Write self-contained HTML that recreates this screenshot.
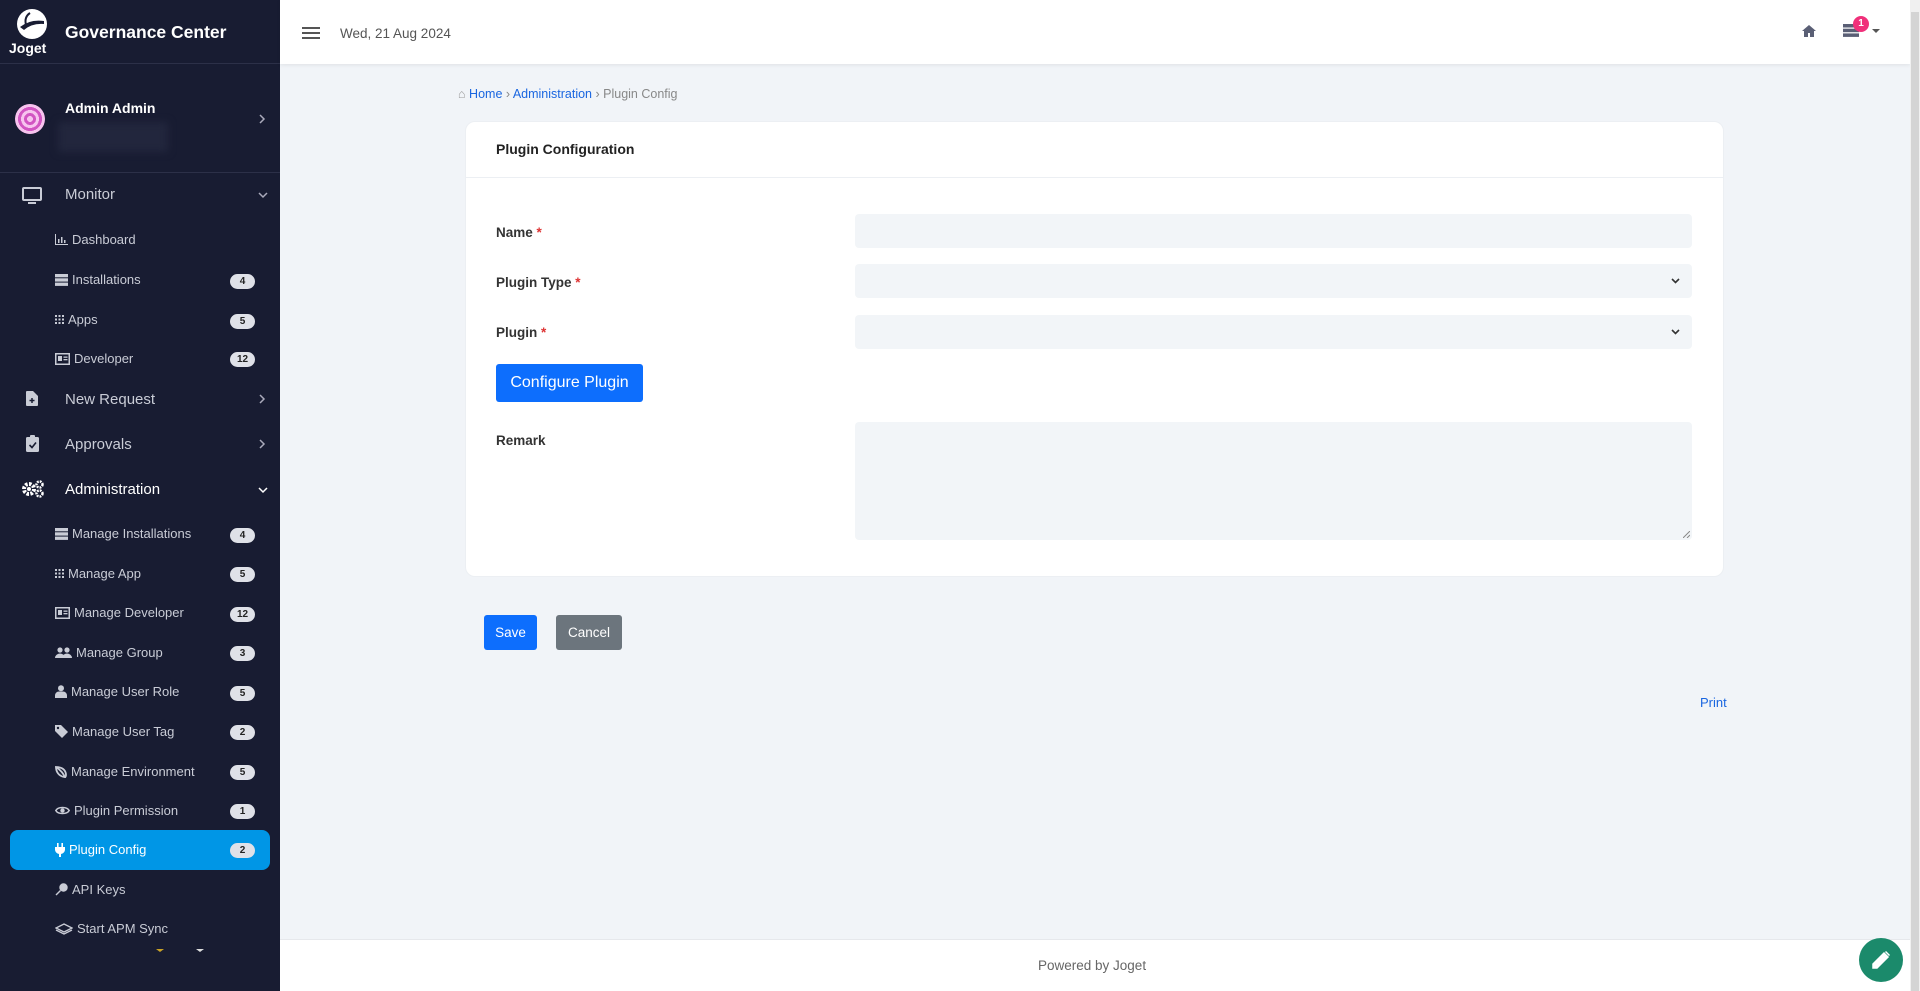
<!DOCTYPE html>
<html><head><meta charset="utf-8"><style>
*{box-sizing:border-box;margin:0;padding:0}
body{width:1920px;height:991px;overflow:hidden;background:#f1f4f8;font-family:"Liberation Sans",sans-serif;position:relative}
#sb{position:absolute;left:0;top:0;width:280px;height:991px;background:#181c32;color:#c9ccd6}
.abs{position:absolute}
.hd{left:0;top:0;width:280px;height:64px;border-bottom:1px solid #2c3048}
.it{position:absolute;left:0;width:280px;font-size:15px;color:#c9ccd6}
.sub{position:absolute;left:55px;font-size:13px;color:#c9ccd6;display:flex;align-items:center;gap:4px}
.sub svg{fill:#c9ccd6}
.bd{position:absolute;left:230px;width:25px;height:15px;border-radius:8px;background:#dfe1e8;color:#222;font-size:10px;font-weight:bold;text-align:center;line-height:15px}
.chev{position:absolute;left:258px}
#top{position:absolute;left:280px;top:0;width:1630px;height:64px;background:#fff;box-shadow:0 1px 4px rgba(0,0,0,.08)}
.lbl{position:absolute;left:496px;font-size:13.5px;font-weight:bold;color:#333}
.lbl span{color:#d33}
.inp{position:absolute;left:855px;width:837px;background:#f2f5f8;border-radius:4px}
</style></head><body>
<div id="sb">
 <div class="abs hd">
  <svg class="abs" style="left:14px;top:7px" width="36" height="34" viewBox="0 0 36 34"><circle cx="18" cy="17" r="15" fill="#fff"/><path d="M6 20 Q16 12 30 14 L30 17 Q18 16 10 23Z" fill="#181c32"/><path d="M16 6 Q10 10 12 18" stroke="#181c32" stroke-width="2" fill="none"/></svg>
  <div class="abs" style="left:9px;top:40px;color:#fff;font-size:14px;font-weight:bold">Joget</div>
  <div class="abs" style="left:65px;top:22px;color:#fff;font-size:17.5px;font-weight:bold">Governance Center</div>
 </div>
 <div class="abs" style="left:15px;top:104px;width:30px;height:30px;border-radius:50%;background:repeating-radial-gradient(circle,#f7c4ee 0 3px,#d255c2 3px 6px)"></div>
 <div class="abs" style="left:65px;top:100px;color:#fff;font-size:14px;font-weight:bold">Admin Admin</div>
 <div class="abs" style="left:58px;top:122px;width:110px;height:30px;background:#22263d;filter:blur(4px)"></div>
 <svg class="chev" style="top:114px" width="8" height="10" viewBox="0 0 8 10"><path d="M2 1l4 4-4 4" stroke="#aab" stroke-width="1.5" fill="none"/></svg>
 <div class="abs" style="left:0;top:172px;width:280px;height:1px;background:#2c3048"></div>

 <div class="it" style="top:186px"><svg class="abs" style="left:22px;top:1px" width="20" height="18" viewBox="0 0 20 18"><rect x="1" y="1" width="18" height="12" rx="1" fill="none" stroke="#c9ccd6" stroke-width="2"/><rect x="6" y="15" width="8" height="2" fill="#c9ccd6"/></svg><span class="abs" style="left:65px">Monitor</span><svg class="chev" style="top:5px" width="10" height="8" viewBox="0 0 10 8"><path d="M1 2l4 4 4-4" stroke="#aab" stroke-width="1.5" fill="none"/></svg></div>
 <div class="sub" style="top:232px"><svg width="13" height="11" viewBox="0 0 13 11"><path d="M0 0h1v10h12v1H0z M3 5h1.5v4H3z M6 3h1.5v6H6z M9 6h1.5v3H9z"/></svg>Dashboard</div>
 <div class="sub" style="top:272px"><svg width="13" height="12" viewBox="0 0 13 12"><rect y="0" width="13" height="3.3"/><rect y="4.3" width="13" height="3.3"/><rect y="8.6" width="13" height="3.3"/></svg>Installations</div><div class="bd" style="top:274px">4</div>
 <div class="sub" style="top:312px"><svg width="9" height="9" viewBox="0 0 9 9"><path d="M0 0h2v2H0zM3.5 0h2v2h-2zM7 0h2v2H7zM0 3.5h2v2H0zM3.5 3.5h2v2h-2zM7 3.5h2v2H7zM0 7h2v2H0zM3.5 7h2v2h-2zM7 7h2v2H7z"/></svg>Apps</div><div class="bd" style="top:314px">5</div>
 <div class="sub" style="top:351px"><svg width="15" height="12" viewBox="0 0 15 12"><rect x=".75" y=".75" width="13.5" height="10.5" fill="none" stroke="#c9ccd6" stroke-width="1.5"/><rect x="3" y="3" width="4" height="5"/><rect x="8.5" y="3.5" width="4" height="1.3"/><rect x="8.5" y="6" width="4" height="1.3"/></svg>Developer</div><div class="bd" style="top:352px">12</div>
 <div class="it" style="top:391px"><svg class="abs" style="left:26px;top:0" width="12" height="15" viewBox="0 0 12 15"><path d="M0 1a1 1 0 011-1h6l5 5v9a1 1 0 01-1 1H1a1 1 0 01-1-1z" fill="#c9ccd6"/><path d="M6 7v5M3.5 9.5h5" stroke="#181c32" stroke-width="1.5"/></svg><span class="abs" style="left:65px">New Request</span><svg class="chev" style="top:3px" width="8" height="10" viewBox="0 0 8 10"><path d="M2 1l4 4-4 4" stroke="#aab" stroke-width="1.5" fill="none"/></svg></div>
 <div class="it" style="top:436px"><svg class="abs" style="left:26px;top:-1px" width="13" height="17" viewBox="0 0 13 17"><rect y="2" width="13" height="15" rx="1.5" fill="#c9ccd6"/><rect x="4" y="0" width="5" height="4" rx="1" fill="#c9ccd6"/><path d="M3.5 10l2.5 2.5 4-5" stroke="#181c32" stroke-width="1.6" fill="none"/></svg><span class="abs" style="left:65px">Approvals</span><svg class="chev" style="top:3px" width="8" height="10" viewBox="0 0 8 10"><path d="M2 1l4 4-4 4" stroke="#aab" stroke-width="1.5" fill="none"/></svg></div>
 <div class="it" style="top:481px;color:#fff"><svg class="abs" style="left:21px;top:-1px" width="24" height="18" viewBox="0 0 24 18"><circle cx="8" cy="9" r="5" fill="none" stroke="#fff" stroke-width="4" stroke-dasharray="2.5 1.4"/><circle cx="8" cy="9" r="2" fill="#fff"/><circle cx="18.5" cy="4.5" r="3" fill="none" stroke="#fff" stroke-width="2.5" stroke-dasharray="1.8 1"/><circle cx="18.5" cy="13.5" r="3" fill="none" stroke="#fff" stroke-width="2.5" stroke-dasharray="1.8 1"/></svg><span class="abs" style="left:65px">Administration</span><svg class="chev" style="top:5px" width="10" height="8" viewBox="0 0 10 8"><path d="M1 2l4 4 4-4" stroke="#fff" stroke-width="1.5" fill="none"/></svg></div>
 <div class="sub" style="top:526px"><svg width="13" height="12" viewBox="0 0 13 12"><rect y="0" width="13" height="3.3"/><rect y="4.3" width="13" height="3.3"/><rect y="8.6" width="13" height="3.3"/></svg>Manage Installations</div><div class="bd" style="top:528px">4</div>
 <div class="sub" style="top:566px"><svg width="9" height="9" viewBox="0 0 9 9"><path d="M0 0h2v2H0zM3.5 0h2v2h-2zM7 0h2v2H7zM0 3.5h2v2H0zM3.5 3.5h2v2h-2zM7 3.5h2v2H7zM0 7h2v2H0zM3.5 7h2v2h-2zM7 7h2v2H7z"/></svg>Manage App</div><div class="bd" style="top:567px">5</div>
 <div class="sub" style="top:605px"><svg width="15" height="12" viewBox="0 0 15 12"><rect x=".75" y=".75" width="13.5" height="10.5" fill="none" stroke="#c9ccd6" stroke-width="1.5"/><rect x="3" y="3" width="4" height="5"/><rect x="8.5" y="3.5" width="4" height="1.3"/><rect x="8.5" y="6" width="4" height="1.3"/></svg>Manage Developer</div><div class="bd" style="top:607px">12</div>
 <div class="sub" style="top:645px"><svg width="17" height="11" viewBox="0 0 17 11"><circle cx="5" cy="3" r="2.6"/><circle cx="12" cy="3" r="2.6"/><path d="M0 11a5 4.5 0 0110 0zM7 11a5 4.5 0 0110 0z"/></svg>Manage Group</div><div class="bd" style="top:646px">3</div>
 <div class="sub" style="top:684px"><svg width="12" height="13" viewBox="0 0 12 13"><circle cx="6" cy="3.2" r="3"/><path d="M0 13v-2.5A4 4 0 014 6.5h4a4 4 0 014 4V13z"/></svg>Manage User Role</div><div class="bd" style="top:686px">5</div>
 <div class="sub" style="top:724px"><svg width="13" height="13" viewBox="0 0 13 13"><path d="M0 0h6l7 7-6 6-7-7z"/><circle cx="3" cy="3" r="1.2" fill="#181c32"/></svg>Manage User Tag</div><div class="bd" style="top:725px">2</div>
 <div class="sub" style="top:764px"><svg width="12" height="12" viewBox="0 0 12 12"><path d="M1 1c6 0 10 3 10 8 0 1-.5 2-1 2.5C8 6 4 3 1 1zM1 1c0 5 3 9 8 10" fill="none" stroke="#c9ccd6" stroke-width="1.8"/></svg>Manage Environment</div><div class="bd" style="top:765px">5</div>
 <div class="sub" style="top:803px"><svg width="15" height="11" viewBox="0 0 15 11"><path d="M.8 5.5C3 1.5 12 1.5 14.2 5.5 12 9.5 3 9.5.8 5.5z" fill="none" stroke="#c9ccd6" stroke-width="1.5"/><circle cx="7.5" cy="5.5" r="2.2"/></svg>Plugin Permission</div><div class="bd" style="top:804px">1</div>
 <div class="abs" style="left:10px;top:830px;width:260px;height:40px;background:#0096e6;border-radius:8px"></div>
 <div class="sub" style="top:842px;color:#fff"><svg width="10" height="14" viewBox="0 0 10 14" style="fill:#fff"><rect x="2" y="0" width="1.6" height="4"/><rect x="6.4" y="0" width="1.6" height="4"/><path d="M0 4h10v3a5 5 0 01-4 4v3H4v-3a5 5 0 01-4-4z"/></svg>Plugin Config</div><div class="bd" style="top:843px">2</div>
 <div class="sub" style="top:882px"><svg width="13" height="13" viewBox="0 0 13 13"><circle cx="8.5" cy="4.5" r="4.2"/><path d="M5 7L.5 11.5 1.5 12.5 6 8z"/></svg>API Keys</div>
 <div class="sub" style="top:921px"><svg width="18" height="12" viewBox="0 0 18 12"><path d="M9 1l8 4-8 4-8-4z" fill="none" stroke="#c9ccd6" stroke-width="1.3"/><path d="M1 7l8 4 8-4" fill="none" stroke="#c9ccd6" stroke-width="1.3"/></svg>Start APM Sync</div>
 <div class="abs" style="left:156px;top:949px;width:0;height:0;border-left:4px solid transparent;border-right:4px solid transparent;border-top:3px solid #c9a227"></div>
 <div class="abs" style="left:196px;top:949px;width:0;height:0;border-left:4px solid transparent;border-right:4px solid transparent;border-top:3px solid #ddd"></div>
</div>

<div id="top">
 <div class="abs" style="left:22px;top:27px;width:18px;height:2px;background:#555;box-shadow:0 5px 0 #555,0 10px 0 #555"></div>
 <div class="abs" style="left:60px;top:26px;font-size:13.5px;color:#555">Wed, 21 Aug 2024</div>
 <svg class="abs" style="left:1522px;top:25px" width="14" height="12" viewBox="0 0 14 12"><path d="M7 0L0 6h2v6h4V8h2v4h4V6h2z" fill="#5a5f75"/></svg>
 <svg class="abs" style="left:1563px;top:24px" width="16" height="13" viewBox="0 0 16 13"><rect width="16" height="3.5" fill="#5a5f75"/><rect y="4.7" width="16" height="3.5" fill="#5a5f75"/><rect y="9.4" width="16" height="3.5" fill="#5a5f75"/></svg>
 <div class="abs" style="left:1573px;top:16px;width:16px;height:16px;border-radius:50%;background:#f0307a;color:#fff;font-size:10px;font-weight:bold;text-align:center;line-height:16px">1</div>
 <div class="abs" style="left:1592px;top:29px;width:0;height:0;border-left:4px solid transparent;border-right:4px solid transparent;border-top:4px solid #555"></div>
</div>
<div class="abs" style="left:1910px;top:0;width:10px;height:991px;background:#f0f0f0"><div style="margin:12px 1px 0;height:979px;background:#d4d4d4"></div></div>

<div class="abs" style="left:458px;top:87px;font-size:12.5px;color:#888"><span style="color:#999">&#8962;</span> <span style="color:#1a66e0">Home</span> › <span style="color:#1a66e0">Administration</span> › Plugin Config</div>

<div class="abs" style="left:465px;top:121px;width:1259px;height:456px;background:#fff;border-radius:10px;border:1px solid #eceff3"></div>
<div class="abs" style="left:465px;top:177px;width:1259px;height:1px;background:#eceff3"></div>
<div class="abs" style="left:496px;top:141px;font-size:14px;font-weight:bold;color:#222">Plugin Configuration</div>

<div class="lbl" style="top:225px">Name <span>*</span></div>
<div class="lbl" style="top:275px">Plugin Type <span>*</span></div>
<div class="lbl" style="top:325px">Plugin <span>*</span></div>
<div class="lbl" style="top:433px">Remark</div>
<div class="inp" style="top:214px;height:34px"></div>
<div class="inp" style="top:264px;height:34px"><svg class="abs" style="right:12px;top:14px" width="9" height="6" viewBox="0 0 9 6"><path d="M1 1l3.5 3.5L8 1" stroke="#333" stroke-width="1.6" fill="none"/></svg></div>
<div class="inp" style="top:315px;height:34px"><svg class="abs" style="right:12px;top:14px" width="9" height="6" viewBox="0 0 9 6"><path d="M1 1l3.5 3.5L8 1" stroke="#333" stroke-width="1.6" fill="none"/></svg></div>
<div class="inp" style="top:422px;height:118px"><svg class="abs" style="right:2px;bottom:2px" width="7" height="7" viewBox="0 0 7 7"><path d="M7 0L0 7M7 4L4 7" stroke="#888" stroke-width="1"/></svg></div>
<div class="abs" style="left:496px;top:364px;width:147px;height:38px;background:#0d6efd;border-radius:3px;color:#fff;font-size:16px;text-align:center;line-height:38px">Configure Plugin</div>

<div class="abs" style="left:484px;top:615px;width:53px;height:35px;background:#0d6efd;border-radius:3px;color:#fff;font-size:13.5px;text-align:center;line-height:35px">Save</div>
<div class="abs" style="left:556px;top:615px;width:66px;height:35px;background:#6c757d;border-radius:3px;color:#fff;font-size:13.5px;text-align:center;line-height:35px">Cancel</div>
<div class="abs" style="left:1700px;top:695px;font-size:13px;color:#1a66e0">Print</div>

<div class="abs" style="left:280px;top:939px;width:1630px;height:52px;background:#fff;border-top:1px solid #e6e8ec"></div>
<div class="abs" style="left:1038px;top:958px;font-size:13.5px;color:#666">Powered by Joget</div>
<div class="abs" style="left:1859px;top:938px;width:44px;height:44px;border-radius:50%;background:#1b8a6b"><svg class="abs" style="left:12px;top:12px" width="20" height="20" viewBox="0 0 20 20"><path d="M2 14L13 3l4 4L6 18H2z M14.5 1.5l4 4" fill="#fff" stroke="#fff" stroke-width="1.5"/></svg></div>
</body></html>
